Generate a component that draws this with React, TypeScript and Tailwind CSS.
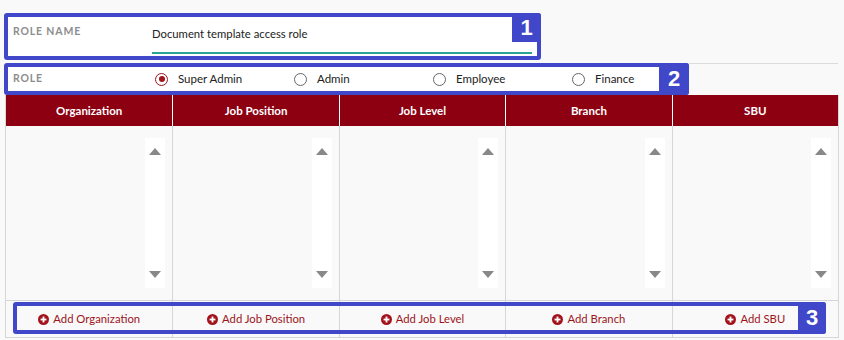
import React from "react";

const cols = ["Organization", "Job Position", "Job Level", "Branch", "SBU"];
const roles = [
  { name: "Super Admin", checked: true },
  { name: "Admin" },
  { name: "Employee" },
  { name: "Finance" },
];

function PlusCircle() {
  return (
    <svg width="11" height="11" viewBox="0 0 12 12" className="shrink-0">
      <circle cx="6" cy="6" r="6" fill="#a3131d" />
      <rect x="2.8" y="5" width="6.4" height="2" fill="#fff" />
      <rect x="5" y="2.8" width="2" height="6.4" fill="#fff" />
    </svg>
  );
}

export default function App() {
  return (
    <div
      className="w-[844px] h-[340px] bg-[#f9f9f9] overflow-hidden"
      style={{ fontFamily: "Lato, 'Open Sans', sans-serif" }}
    >
      <div className="pt-[13px] pl-[4px]">
        {/* Row 1 */}
        <div className="relative w-[537px] h-[47px] border-[4px] border-[#4048c9] rounded-[3px] bg-white flex">
          <div className="absolute left-[5px] top-[7px] text-[10.5px] font-bold tracking-[0.08em] text-[#8d8d8d] whitespace-nowrap">ROLE NAME</div>
          <div className="ml-[144px] w-[380px] pt-[9px]">
            <div className="text-[11.3px] text-[#222] leading-[16px] whitespace-nowrap">Document template access role</div>
            <div className="mt-[10px] h-[2px] bg-[#2aa593]" />
          </div>
          <div className="absolute -top-[4px] -right-[4px] w-[29px] h-[29px] bg-[#4048c9] rounded-tr-[3px] flex items-center justify-center text-white text-[22px] font-bold leading-none" style={{ fontFamily: "'Liberation Sans', Arial, sans-serif" }}>1</div>
        </div>
        {/* Row 2 */}
        <div className="flex mt-[3px]">
          <div className="relative w-[685px] h-[32px] border-[4px] border-[#4048c9] rounded-[3px] bg-white flex items-center">
            <div className="absolute left-[5px] top-[4px] text-[10.5px] font-bold tracking-[0.08em] text-[#8d8d8d]">ROLE</div>
            <div className="flex ml-[147px]">
              {roles.map((r) => (
                <div key={r.name} className="flex items-center w-[139px] shrink-0 whitespace-nowrap">
                  {r.checked ? (
                    <span className="w-[13px] h-[13px] rounded-full border-[1.5px] border-[#a3131d] flex items-center justify-center shrink-0">
                      <span className="w-[6px] h-[6px] rounded-full bg-[#a3131d]" />
                    </span>
                  ) : (
                    <span className="w-[13px] h-[13px] rounded-full border border-[#666] shrink-0" />
                  )}
                  <span className="ml-[10px] text-[11.5px] text-[#222]">{r.name}</span>
                </div>
              ))}
            </div>
            <div className="absolute -top-[4px] -bottom-[4px] -right-[4px] w-[30px] bg-[#4048c9] rounded-r-[3px] flex items-center justify-center text-white text-[22px] font-bold leading-none" style={{ fontFamily: "'Liberation Sans', Arial, sans-serif" }}>2</div>
          </div>
          <div className="w-[149px] border-t border-[#dcdcdc]" />
        </div>
      </div>
      {/* Table */}
      <div className="ml-[5px] w-[834px] border-x border-b border-[#d6d6d6]">
        <div className="grid grid-cols-5 h-[31px] bg-[#8c0012]">
          {cols.map((c, i) => (
            <div key={c} className={`flex items-center justify-center text-white text-[11.5px] font-bold ${i > 0 ? "border-l border-white" : ""}`}>
              {c}
            </div>
          ))}
        </div>
        <div className="grid grid-cols-5 h-[174px]">
          {cols.map((c, i) => (
            <div key={c} className={`flex justify-end pr-[7px] py-[12px] ${i > 0 ? "border-l border-[#d6d6d6]" : ""}`}>
              <div className="w-[20px] bg-white flex flex-col items-center justify-between pt-[10px] pb-[10px]">
                <span className="w-0 h-0 border-l-[6px] border-r-[6px] border-b-[7px] border-l-transparent border-r-transparent border-b-[#888]" />
                <span className="w-0 h-0 border-l-[6px] border-r-[6px] border-t-[7px] border-l-transparent border-r-transparent border-t-[#888]" />
              </div>
            </div>
          ))}
        </div>
        <div className="relative grid grid-cols-5 h-[37px] border-t border-[#d6d6d6]">
          {cols.map((c, i) => (
            <div key={c} className={`flex items-center justify-center gap-[4px] text-[11.3px] text-[#9b1520] ${i > 0 ? "border-l border-[#d6d6d6]" : ""}`}>
              <PlusCircle />
              <span>Add {c}</span>
            </div>
          ))}
          <div className="absolute left-[7px] top-[1px] w-[813px] h-[32px] border-[4px] border-[#4048c9] rounded-[3px]">
            <div className="absolute -top-[4px] -bottom-[4px] -right-[4px] w-[28px] bg-[#4048c9] rounded-r-[3px] flex items-center justify-center text-white text-[22px] font-bold leading-none" style={{ fontFamily: "'Liberation Sans', Arial, sans-serif" }}>3</div>
          </div>
        </div>
      </div>
    </div>
  );
}
